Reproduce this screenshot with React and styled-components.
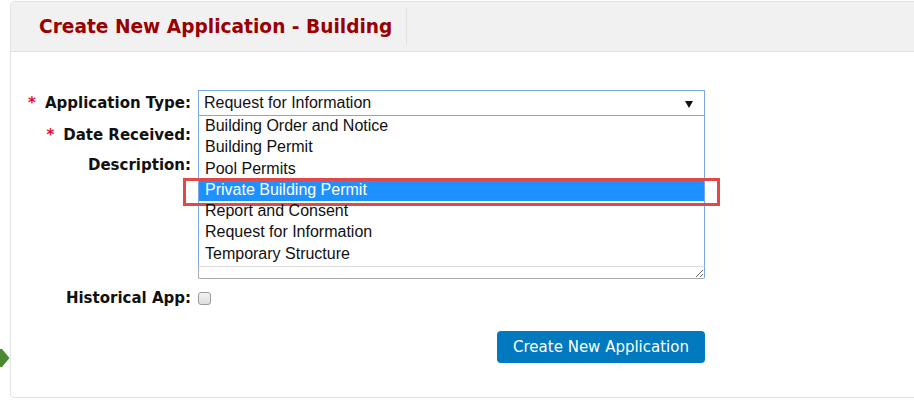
import styled, { createGlobalStyle } from "styled-components";

const GlobalStyle = createGlobalStyle`
  html, body {
    margin: 0;
    padding: 0;
    overflow: hidden;
    background: #fff;
  }
  body {
    font-family: "DejaVu Sans", Verdana, sans-serif;
    color: #111;
  }
`;

const Page = styled.div`
  position: relative;
  width: 914px;
  height: 410px;
  padding-top: 1px;
  box-sizing: border-box;
`;

const Panel = styled.section`
  margin-left: 10px;
  width: 920px;
  height: 397px;
  box-sizing: border-box;
  border: 1px solid #e2e2e2;
  border-radius: 4px;
  overflow: hidden;
`;

const Header = styled.header`
  display: flex;
  align-items: center;
  height: 49px;
  background: #f1f1f1;
  border-bottom: 1px solid #e2e2e2;
`;

const Tab = styled.div`
  height: 37px;
  display: flex;
  align-items: center;
  padding: 0 14px 0 28px;
  border-right: 1px solid #e0e0e0;
`;

const Title = styled.h1`
  margin: 0;
  font-size: 18.6px;
  font-weight: bold;
  color: #990000;
  white-space: nowrap;
`;

const Form = styled.form`
  display: grid;
  grid-template-columns: 180px 507px;
  column-gap: 7px;
  row-gap: 6px;
  padding: 38px 0 0 0;
`;

const Label = styled.label`
  justify-self: end;
  align-self: start;
  font-size: 15px;
  font-weight: bold;
  line-height: ${(p) => p.$line || 26}px;
  white-space: nowrap;
`;

const Req = styled.span`
  color: #e0102a;
  margin-right: 9px;
`;

const Field = styled.div`
  position: relative;
  margin-top: ${(p) => p.$offset || 0}px;
  justify-self: ${(p) => p.$align || "stretch"};
`;

const SelectBox = styled.div`
  position: relative;
  height: 26px;
  box-sizing: border-box;
  border: 1px solid #7aa7e6;
  background: #fff;
  font-family: "Liberation Sans", Arial, sans-serif;
  font-size: 16px;
  line-height: 23px;
  padding-left: 5px;
  z-index: 3;

  &::after {
    content: "";
    position: absolute;
    right: 11px;
    top: 10px;
    border-left: 4px solid transparent;
    border-right: 4px solid transparent;
    border-top: 7px solid #111;
  }
`;

const OptionList = styled.ul`
  position: absolute;
  left: 0;
  right: 0;
  top: 26px;
  margin: 0;
  padding: 0;
  list-style: none;
  height: 151px;
  box-sizing: border-box;
  background: #fff;
  border: 1px solid #7aa7e6;
  border-top: none;
  border-bottom: 1px solid #dcdcdc;
  font-family: "Liberation Sans", Arial, sans-serif;
  font-size: 16px;
  z-index: 2;
`;

const Option = styled.li`
  position: relative;
  height: 21.3px;
  line-height: 19px;
  padding-left: 6px;
  color: ${(p) => (p.$active ? "#fff" : "#111")};
  background: ${(p) => (p.$active ? "#1e90ff" : "transparent")};
`;

const Callout = styled.span`
  position: absolute;
  left: -16px;
  right: -16px;
  top: -2px;
  height: 28px;
  box-sizing: border-box;
  border: 3px solid #e24848;
  pointer-events: none;
`;

const Input = styled.input`
  display: block;
  width: 100%;
  height: 26px;
  box-sizing: border-box;
  border: 1px solid #aaa;
`;

const TextArea = styled.textarea`
  display: block;
  width: 100%;
  height: 125px;
  box-sizing: border-box;
  border: 1px solid #a9a9a9;
  border-right-color: #7aa7e6;
  border-radius: 2px;
  margin: 0;
`;

const CheckRow = styled.div`
  height: 26px;
  display: flex;
  align-items: center;
`;

const Checkbox = styled.input`
  appearance: none;
  margin: 0;
  width: 13px;
  height: 13px;
  border: 1px solid #9a9a9a;
  border-radius: 3px;
  background: linear-gradient(#f4f4f4, #dcdcdc);
`;

const Button = styled.button`
  width: 208px;
  height: 32px;
  border: none;
  border-radius: 4px;
  background: #0079be;
  color: #fff;
  font-family: "DejaVu Sans", Verdana, sans-serif;
  font-size: 15px;
  cursor: pointer;
`;

const SideArrow = styled.svg`
  position: absolute;
  left: 0;
  top: 349px;
`;

const options = [
  "Building Order and Notice",
  "Building Permit",
  "Pool Permits",
  "Private Building Permit",
  "Report and Consent",
  "Request for Information",
  "Temporary Structure",
];

export default function App() {
  return (
    <Page>
      <GlobalStyle />
      <Panel>
        <Header>
          <Tab>
            <Title>Create New Application - Building</Title>
          </Tab>
        </Header>
        <Form onSubmit={(e) => e.preventDefault()}>
          <Label>
            <Req>*</Req>Application Type:
          </Label>
          <Field>
            <SelectBox>Request for Information</SelectBox>
            <OptionList>
              {options.map((o) => (
                <Option key={o} $active={o === "Private Building Permit"}>
                  {o}
                  {o === "Private Building Permit" && <Callout />}
                </Option>
              ))}
            </OptionList>
          </Field>

          <Label>
            <Req>*</Req>Date Received:
          </Label>
          <Field>
            <Input type="text" />
          </Field>

          <Label $line={22}>Description:</Label>
          <Field>
            <TextArea />
          </Field>

          <Label>Historical App:</Label>
          <CheckRow>
            <Checkbox type="checkbox" />
          </CheckRow>

          <span />
          <Field $offset={14} $align="end">
            <Button type="submit">Create New Application</Button>
          </Field>
        </Form>
      </Panel>
      <SideArrow width="10" height="18" viewBox="0 0 10 18">
        <polygon points="0,0 2,0 9.5,9 2,18 0,18" fill="#4b8a32" />
      </SideArrow>
    </Page>
  );
}
